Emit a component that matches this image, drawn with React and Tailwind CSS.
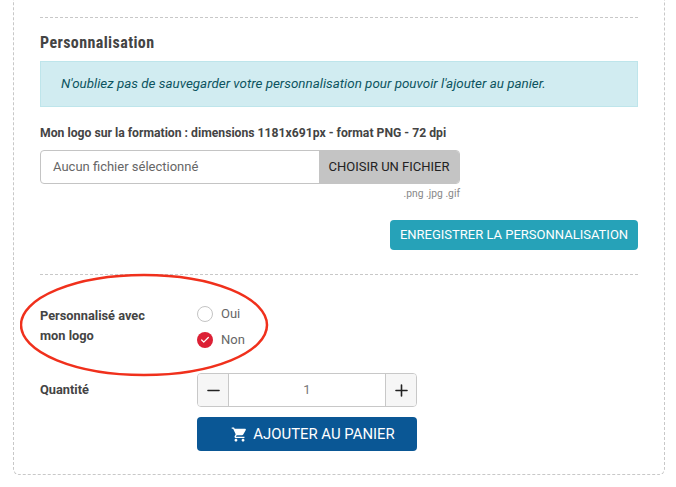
import React from 'react';
import { Check, Minus, Plus } from 'lucide-react';

const App = () => {
    return (
        <div className="h-[487px] w-[676px] overflow-hidden bg-white font-['Roboto',sans-serif] text-[13.4px] text-[#444]">
            <div className="relative ml-[13px] -mt-[20px] h-[495px] w-[652px] rounded-b-md border border-dashed border-[#c8c8c8] px-[26px] pt-[36px]">
                <div className="border-t border-dashed border-[#c8c8c8] pt-[15px]">
                    <h3 className="text-[16px] leading-[20px] font-bold tracking-[0.4px] text-[#444] [font-stretch:75%]">Personnalisation</h3>
                    <div className="mt-[8px] h-[46px] border border-[#bee5eb] bg-[#d1ecf1] pl-[20px] leading-[44px] text-[#0c5460] italic">
                        N'oubliez pas de sauvegarder votre personnalisation pour pouvoir l'ajouter au panier.
                    </div>
                    <div className="mt-[17px] text-[12.2px] leading-[18px] font-bold">Mon logo sur la formation : dimensions 1181x691px - format PNG - 72 dpi</div>
                    <div className="mt-[8px] flex h-[34px] w-[420px] overflow-hidden rounded border border-[#c4c4c4]">
                        <div className="flex-1 pl-[12px] text-[13px] leading-[32px] text-[#666]">Aucun fichier sélectionné</div>
                        <div className="w-[140px] bg-[#c4c4c4] text-center text-[13px] leading-[32px] text-[#222]">CHOISIR UN FICHIER</div>
                    </div>
                    <div className="mt-[3px] w-[420px] text-right text-[10.3px] leading-[14px] text-[#888]">.png .jpg .gif</div>
                    <div className="mt-[19px] flex justify-end">
                        <button className="h-[30px] w-[248px] rounded-sm bg-[#26a2b8] text-[13px] text-white">ENREGISTRER LA PERSONNALISATION</button>
                    </div>
                    <div className="mt-[24px] border-t border-dashed border-[#c8c8c8]"></div>
                    <div className="mt-[31px] flex">
                        <div className="w-[157px] text-[12.8px] leading-[20px] font-bold">Personnalisé avec<br />mon logo</div>
                        <div className="flex flex-col gap-[10px]">
                            <div className="flex h-[16px] items-center gap-[8px]">
                                <span className="h-[16px] w-[16px] rounded-full border border-[#c4c4c4]"></span>
                                <span className="text-[13px] text-[#666]">Oui</span>
                            </div>
                            <div className="flex h-[16px] items-center gap-[8px]">
                                <span className="flex h-[16px] w-[16px] items-center justify-center rounded-full bg-[#dc2035] text-white">
                                    <Check size={10} strokeWidth={3} />
                                </span>
                                <span className="text-[13px] text-[#666]">Non</span>
                            </div>
                        </div>
                    </div>
                    <div className="mt-[25px] flex">
                        <div className="w-[157px] pt-[8px] text-[12.8px] leading-[18px] font-bold">Quantité</div>
                        <div className="w-[220px]">
                            <div className="flex h-[34px] overflow-hidden rounded border border-[#c8c8c8]">
                                <div className="flex w-[31px] items-center justify-center border-r border-[#c8c8c8] bg-[#f6f6f6] text-[#222]"><Minus size={19} strokeWidth={2} /></div>
                                <div className="flex-1 text-center text-[13px] leading-[32px] text-[#777]">1</div>
                                <div className="flex w-[31px] items-center justify-center border-l border-[#c8c8c8] bg-[#f6f6f6] text-[#222]"><Plus size={19} strokeWidth={2} /></div>
                            </div>
                            <button className="mt-[10px] flex h-[34px] w-[220px] items-center justify-center gap-[5px] rounded-sm bg-[#0a5795] pl-[12px] text-[14.9px] text-white">
                                <svg width="17" height="17" viewBox="0 0 24 24" fill="white">
                                    <path d="M7 18c-1.1 0-1.99.9-1.99 2S5.9 22 7 22s2-.9 2-2-.9-2-2-2zM1 2v2h2l3.6 7.59-1.35 2.45c-.16.28-.25.61-.25.96 0 1.1.9 2 2 2h12v-2H7.42c-.14 0-.25-.11-.25-.25l.03-.12.9-1.63h7.45c.75 0 1.41-.41 1.75-1.03l3.58-6.49c.08-.14.12-.31.12-.48 0-.55-.45-1-1-1H5.21l-.94-2H1zm16 16c-1.1 0-1.99.9-1.99 2s.89 2 1.99 2 2-.9 2-2-.9-2-2-2z" />
                                </svg>
                                AJOUTER AU PANIER
                            </button>
                        </div>
                    </div>
                </div>
                {/* red hand-drawn circle over the logo option */}
                <svg className="absolute top-[292px] left-[6px]" width="250" height="104" viewBox="0 0 250 104" fill="none">
                    <ellipse cx="124" cy="52" rx="123" ry="50" stroke="#f0301c" strokeWidth="2.5" />
                </svg>
            </div>
        </div>
    );
};

export default App;
